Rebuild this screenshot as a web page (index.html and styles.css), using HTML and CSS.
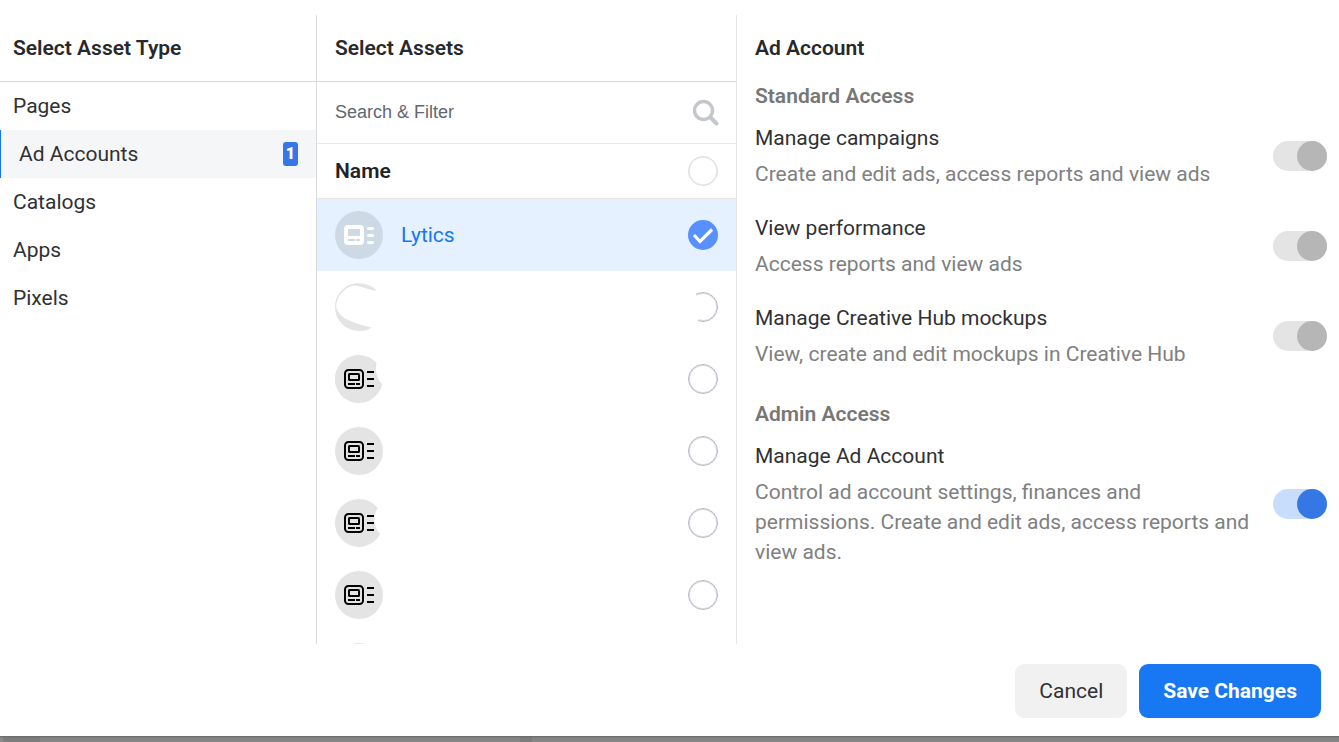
FILE: index.html
```html
<!DOCTYPE html>
<html lang="en">
<head>
<meta charset="utf-8">
<meta name="viewport" content="width=device-width, initial-scale=1">
<title>Select Assets</title>
<link rel="stylesheet" href="styles.css">
</head>
<body>
<svg class="defs" aria-hidden="true">
  <symbol id="ad" viewBox="0 0 30 20">
    <rect x="1" y="1" width="18" height="18" rx="3.500"/>
    <rect x="5" y="5" width="10" height="6" rx=".5"/>
    <path d="M4 15h7M12 15h4M23 3h7M23 10h7M23 17h7"/>
  </symbol>
</svg>
<main class="dialog">
  <div class="columns">
    <section class="column types">
      <h2 class="title">Select Asset Type</h2>
      <nav class="type-list">
        <a class="type" href="#">Pages</a>
        <a class="type selected" href="#">Ad Accounts <span class="badge">1</span></a>
        <a class="type" href="#">Catalogs</a>
        <a class="type" href="#">Apps</a>
        <a class="type" href="#">Pixels</a>
      </nav>
    </section>
    <section class="column assets">
      <h2 class="title">Select Assets</h2>
      <div class="search">
        <input class="search-input" type="text" placeholder="Search &amp; Filter" aria-label="Search and filter">
        <svg class="search-icon" viewBox="0 0 28 28" aria-hidden="true"><circle cx="11.500" cy="11.500" r="9"/><path d="M18.500 18.500l6 6"/></svg>
      </div>
      <label class="name-row"><span>Name</span><input class="check faint" type="checkbox"></label>
      <ul class="asset-list">
        <li><label class="asset chosen">
          <svg class="avatar" viewBox="0 0 48 48" aria-hidden="true"><circle class="disc" cx="24" cy="24" r="24"/><g class="solid"><rect x="9" y="14" width="20" height="20" rx="4"/><path class="line" d="M33.500 17.500h4M33.500 24.500h4M33.500 31.500h4"/><path class="disc" d="M13 18h12v7H13zM13 28h7v2h-7zM21 28h4v2h-4z"/></g></svg>
          <span class="asset-name">Lytics</span>
          <input class="check" type="checkbox" checked>
        </label></li>
        <li><label class="asset">
          <svg class="avatar" viewBox="0 0 48 48" aria-hidden="true"><path class="disc" d="M42 8C36 1 25-2 14 2C6 6 0 14 0 24A24 24 0 0 0 24 48C29 48 33 47 37 44.500C28 43 20 40 13 37C5 33 0 27 1.500 20C4 10 12 3 20 2.500C28 4 35 7 42 8Z"/></svg>
          <input class="check partial" type="checkbox" aria-label="Asset 2">
        </label></li>
        <li><label class="asset">
          <svg class="avatar" viewBox="0 0 48 48" aria-hidden="true"><path class="disc" d="M41.500 7.800A24 24 0 1 0 47.300 29Q39 21 41.500 7.800Z"/><use class="glyph" href="#ad" x="9" y="14" width="30" height="20"/></svg>
          <input class="check" type="checkbox" aria-label="Asset 3">
        </label></li>
        <li><label class="asset">
          <svg class="avatar" viewBox="0 0 48 48" aria-hidden="true"><circle class="disc" cx="24" cy="24" r="24"/><use class="glyph" href="#ad" x="9" y="14" width="30" height="20"/></svg>
          <input class="check" type="checkbox" aria-label="Asset 4">
        </label></li>
        <li><label class="asset">
          <svg class="avatar" viewBox="0 0 48 48" aria-hidden="true"><path class="disc" d="M42.700 9A24 24 0 1 0 45.300 35C38 28 38 16 42.700 9Z"/><use class="glyph" href="#ad" x="9" y="14" width="30" height="20"/></svg>
          <input class="check" type="checkbox" aria-label="Asset 5">
        </label></li>
        <li><label class="asset">
          <svg class="avatar" viewBox="0 0 48 48" aria-hidden="true"><circle class="disc" cx="24" cy="24" r="24"/><use class="glyph" href="#ad" x="9" y="14" width="30" height="20"/></svg>
          <input class="check" type="checkbox" aria-label="Asset 6">
        </label></li>
        <li><label class="asset">
          <svg class="avatar" viewBox="0 0 48 48" aria-hidden="true"><circle class="disc" cx="24" cy="24" r="24"/></svg>
          <input class="check" type="checkbox" aria-label="Asset 7">
        </label></li>
      </ul>
    </section>
    <section class="column access">
      <h2 class="access-title">Ad Account</h2>
      <h3 class="group-title">Standard Access</h3>
      <div class="permissions">
        <label class="permission"><span class="copy"><span>Manage campaigns</span><span class="description">Create and edit ads, access reports and view ads</span></span><input class="toggle" type="checkbox" role="switch" checked disabled></label>
        <label class="permission"><span class="copy"><span>View performance</span><span class="description">Access reports and view ads</span></span><input class="toggle" type="checkbox" role="switch" checked disabled></label>
        <label class="permission"><span class="copy"><span>Manage Creative Hub mockups</span><span class="description">View, create and edit mockups in Creative Hub</span></span><input class="toggle" type="checkbox" role="switch" checked disabled></label>
      </div>
      <h3 class="group-title admin">Admin Access</h3>
      <div class="permissions">
        <label class="permission"><span class="copy"><span>Manage Ad Account</span><span class="description">Control ad account settings, finances and permissions. Create and edit ads, access reports and view ads.</span></span><input class="toggle" type="checkbox" role="switch" checked></label>
      </div>
    </section>
  </div>
  <footer class="actions">
    <button class="button" type="button">Cancel</button>
    <button class="button primary" type="button">Save Changes</button>
  </footer>
</main>
<div class="backdrop"></div>
</body>
</html>
```
FILE: styles.css
```css
* { box-sizing: border-box; }
body {
  margin: 0;
  height: 100vh;
  display: flex;
  flex-direction: column;
  background: #868686;
  color: #303133;
  font: 400 21px/30px Roboto, "Liberation Sans", sans-serif;
}
.defs { display: none; }
.dialog {
  flex: 1;
  min-height: 0;
  display: flex;
  flex-direction: column;
  padding-top: 15px;
  background: #fff;
}
.columns {
  flex: 1;
  min-height: 0;
  display: grid;
  grid-template-columns: 317fr 420fr 602fr;
}
.column { min-width: 0; min-height: 0; display: flex; flex-direction: column; }
.types { border-right: 1px solid #d9dadc; }
.assets { border-right: 1px solid #e4e6ea; overflow: hidden; }
.title, .access-title, .group-title { margin: 0; font-size: 21px; font-weight: 600; }
.title, .access-title { color: #28292b; }
.title { padding: 18px 18px 18px 13px; border-bottom: 1px solid #d9dadc; }
.assets .title { padding-left: 18px; }
.type {
  display: flex;
  align-items: center;
  justify-content: space-between;
  height: 48px;
  padding: 0 18px 0 13px;
  color: inherit;
  text-decoration: none;
}
.type.selected { padding-left: 18px; border-left: 1px solid #1877f2; background: #f5f6f8; }
.badge {
  width: 15px;
  border-radius: 3px;
  background: #3578e5;
  color: #fff;
  font-size: 16px;
  font-weight: 900;
  line-height: 24px;
  text-align: center;
}
.search {
  display: flex;
  align-items: center;
  height: 62px;
  padding: 0 16px 0 18px;
  border-bottom: 1px solid #e9eaed;
}
.search-input {
  flex: 1;
  min-width: 0;
  padding: 0 0 2px;
  border: 0;
  outline: 0;
  background: none;
  font: 18px/24px "Liberation Sans", Arial, sans-serif;
}
.search-input::placeholder { color: #606770; opacity: 1; }
.search-icon { width: 28px; height: 28px; fill: none; stroke: #c3c7cd; stroke-width: 3.500; stroke-linecap: round; }
.search-icon path { stroke-width: 4; }
.name-row {
  display: flex;
  align-items: center;
  justify-content: space-between;
  height: 55px;
  padding: 0 18px;
  border-bottom: 1px solid #e4e6ea;
  color: #222325;
  font-weight: 600;
}
.check {
  appearance: none;
  flex: none;
  width: 30px;
  height: 30px;
  margin: 0;
  border: 1px solid #b4b8c2;
  border-radius: 50%;
  background: #fff;
  box-shadow: inset 0 0 0 1px #dcdee3;
}
.check.faint { border-color: #d9dbe0; box-shadow: inset 0 0 0 1px #eeeff1; }
.check:checked {
  border: 0;
  box-shadow: none;
  background: #5890ff url("data:image/svg+xml,%3Csvg xmlns='http://www.w3.org/2000/svg' viewBox='0 0 30 30'%3E%3Cpath d='M6 15L12 21.500L24 9.500' fill='none' stroke='white' stroke-width='3.200'/%3E%3C/svg%3E");
}
.check.partial { clip-path: polygon(22% 0, 50% 50%, 32% 100%, 100% 100%, 100% 0); }
.asset-list { flex: 1; min-height: 0; margin: 0; padding: 0; overflow: hidden; list-style: none; }
.asset { display: flex; align-items: center; gap: 18px; height: 72px; padding: 0 18px; }
.asset .check { margin-left: auto; }
.chosen { background: #e5f1ff; color: #1877f2; }
.avatar { flex: none; width: 48px; height: 48px; }
.disc { fill: #e4e4e4; }
.chosen .disc { fill: #ced9e6; }
.glyph { fill: none; stroke: #000; stroke-width: 2; }
.solid { fill: #fff; }
.line { stroke: #fff; stroke-width: 3; stroke-linecap: round; }
.access { padding: 18px 12px 0 18px; }
.group-title { margin: 18px 0 12px; color: #777; }
.group-title.admin { margin-top: 30px; }
.permissions { display: grid; gap: 24px; }
.permission { display: flex; align-items: center; justify-content: space-between; gap: 18px; }
.copy { display: grid; gap: 6px; }
.description { color: #808080; }
.toggle {
  appearance: none;
  flex: none;
  display: flex;
  justify-content: flex-end;
  width: 54px;
  height: 30px;
  margin: 0;
  border-radius: 15px;
  background: #c7ddfb;
}
.toggle::before { content: ""; width: 30px; height: 30px; border-radius: 50%; background: #3578e5; }
.toggle:disabled { background: #e4e4e4; }
.toggle:disabled::before { background: #b6b6b6; }
.actions { display: flex; justify-content: flex-end; gap: 12px; padding: 20px 18px 18px; }
.button {
  height: 54px;
  padding: 0 24px;
  border: 0;
  border-radius: 9px;
  background: #f1f1f1;
  color: inherit;
  font: inherit;
}
.primary { background: #1877f2; color: #fff; font-weight: 700; }
.backdrop {
  flex: none;
  height: 6px;
  background: linear-gradient(90deg, #8b8b8b 3px, #7d7d7d 3px 40px, #868686 40px 520px, #7d7d7d 520px 532px, #868686 532px);
  box-shadow: inset 0 2px 2px -1px #686868;
}
```
